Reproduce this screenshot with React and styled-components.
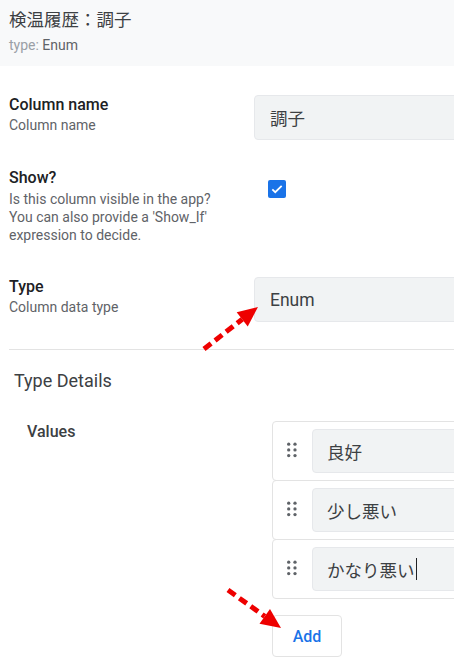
import React from "react"
import styled, { createGlobalStyle } from "styled-components"

const GlobalStyle = createGlobalStyle`
  html, body {
    margin: 0;
    padding: 0;
    background: #fff;
    overflow: hidden;
  }
  body {
    font-family: Roboto, "Noto Sans CJK JP", sans-serif;
    color: #3c4043;
  }
`

const Page = styled.div`
  position: relative;
  width: 454px;
  height: 664px;
  overflow: hidden;
`

const Header = styled.div`
  background: #f8f9fa;
  height: 66px;
  padding: 6px 9px 0;
  box-sizing: border-box;
`

const Title = styled.div`
  font-family: "Noto Sans CJK JP", Roboto, sans-serif;
  font-size: 17.5px;
  line-height: 26px;
  color: #3c4043;
`

const TypeLine = styled.div`
  font-size: 14px;
  line-height: 18px;
  margin-top: 4px;
  color: #5f6368;

  & > span {
    color: #9aa0a6;
  }
`

const Body = styled.div`
  padding: 0 0 0 9px;
`

const Row = styled.div`
  display: grid;
  grid-template-columns: 245px 300px;
  margin-top: ${p => p.$top}px;
`

const Label = styled.div`
  font-size: 16px;
  line-height: 20px;
  font-weight: 500;
  color: #202124;
`

const Help = styled.div`
  font-size: 14px;
  line-height: 18px;
  color: #5f6368;
  margin-top: ${p => p.$gap || 1}px;
`

const Field = styled.div`
  height: 45px;
  box-sizing: border-box;
  background: #f1f3f4;
  border: 1px solid #e6e8eb;
  border-radius: 4px;
  padding: 0 0 0 15px;
  display: flex;
  align-items: center;
  font-family: ${p => (p.$cjk ? '"Noto Sans CJK JP", Roboto, sans-serif' : 'Roboto, "Noto Sans CJK JP", sans-serif')};
  font-size: 17.5px;
  color: #3c4043;
`

const CheckWrap = styled.div`
  width: 40px;
  height: 40px;
  margin: 1px 0 0 3px;
  display: flex;
  align-items: center;
  justify-content: center;
`

const CheckBox = styled.div`
  width: 18px;
  height: 18px;
  border-radius: 2px;
  background: #1a73e8;
  display: flex;
  align-items: center;
  justify-content: center;
`

const Divider = styled.div`
  height: 1px;
  background: #e3e3e3;
  margin-top: 27px;
`

const SectionTitle = styled.div`
  font-size: 18px;
  line-height: 24px;
  color: #3c4043;
  margin: 19px 0 0 5px;
`

const ValuesRow = styled.div`
  display: grid;
  grid-template-columns: 263px 300px;
  margin-top: 28px;
`

const ValuesLabel = styled.div`
  font-size: 16px;
  line-height: 20px;
  font-weight: 500;
  color: #3c4043;
  padding: 1px 0 0 18px;
`

const List = styled.div`
  display: flex;
  flex-direction: column;
`

const Item = styled.div`
  display: flex;
  align-items: center;
  height: 60px;
  box-sizing: border-box;
  border: 1px solid #e3e3e3;
  border-radius: 4px;
  margin-top: -1px;
  &:first-child {
    margin-top: 0;
  }
`

const Handle = styled.div`
  width: 39px;
  display: flex;
  padding: 0 0 2px 14px;
  box-sizing: border-box;
`

const ItemField = styled(Field)`
  flex: 1;
  height: 44px;
  padding-left: 14px;
`

const Caret = styled.span`
  display: inline-block;
  width: 1px;
  height: 22px;
  background: #202124;
  margin-left: 1px;
`

const AddButton = styled.button`
  width: 70px;
  height: 42px;
  margin-top: 16px;
  background: #fff;
  border: 1px solid #e3e3e3;
  border-radius: 4px;
  font-family: Roboto, sans-serif;
  font-size: 16px;
  font-weight: 500;
  color: #1a73e8;
  padding: 0;
`

const Overlay = styled.svg`
  position: absolute;
  left: 0;
  top: 0;
  pointer-events: none;
`

const DragDots = () => (
  <svg width="10" height="16" viewBox="0 0 10 16">
    {[2.2, 7.9, 13.6].map(y =>
      [1.7, 8].map(x => <circle key={`${x}-${y}`} cx={x} cy={y} r="1.65" fill="#5f6368" />)
    )}
  </svg>
)

const Arrow = ({ x1, y1, x2, y2 }) => {
  const ang = Math.atan2(y2 - y1, x2 - x1)
  const len = 20
  const w = 9
  const bx = x2 - Math.cos(ang) * len
  const by = y2 - Math.sin(ang) * len
  const px = Math.sin(ang) * w
  const py = -Math.cos(ang) * w
  return (
    <g>
      <line x1={x1} y1={y1} x2={bx} y2={by} stroke="#ee0000" strokeWidth="5" strokeDasharray="9 5" />
      <polygon points={`${x2},${y2} ${bx + px},${by + py} ${bx - px},${by - py}`} fill="#ee0000" />
    </g>
  )
}

const values = ["良好", "少し悪い", "かなり悪い"]

const App = () => (
  <Page>
    <GlobalStyle />
    <Header>
      <Title>検温履歴：調子</Title>
      <TypeLine><span>type:</span> Enum</TypeLine>
    </Header>
    <Body>
      <Row $top={29}>
        <div>
          <Label>Column name</Label>
          <Help>Column name</Help>
        </div>
        <Field $cjk>調子</Field>
      </Row>
      <Row $top={28}>
        <div>
          <Label>Show?</Label>
          <Help $gap={2}>
            Is this column visible in the app?<br />
            You can also provide a 'Show_If'<br />
            expression to decide.
          </Help>
        </div>
        <CheckWrap>
          <CheckBox>
            <svg width="14" height="14" viewBox="0 0 24 24">
              <path d="M4 12.5l5 5L20 6.5" fill="none" stroke="#fff" strokeWidth="3" />
            </svg>
          </CheckBox>
        </CheckWrap>
      </Row>
      <Row $top={33}>
        <div>
          <Label>Type</Label>
          <Help>Column data type</Help>
        </div>
        <Field>Enum</Field>
      </Row>
      <Divider />
      <SectionTitle>Type Details</SectionTitle>
      <ValuesRow>
        <ValuesLabel>Values</ValuesLabel>
        <div>
          <List>
            {values.map((v, i) => (
              <Item key={v}>
                <Handle><DragDots /></Handle>
                <ItemField $cjk>
                  {v}
                  {i === values.length - 1 && <Caret />}
                </ItemField>
              </Item>
            ))}
          </List>
          <AddButton>Add</AddButton>
        </div>
      </ValuesRow>
    </Body>
    <Overlay width="454" height="664">
      <Arrow x1={204} y1={349} x2={258} y2={307} />
      <Arrow x1={228} y1={590} x2={281} y2={628} />
    </Overlay>
  </Page>
)

export default App
